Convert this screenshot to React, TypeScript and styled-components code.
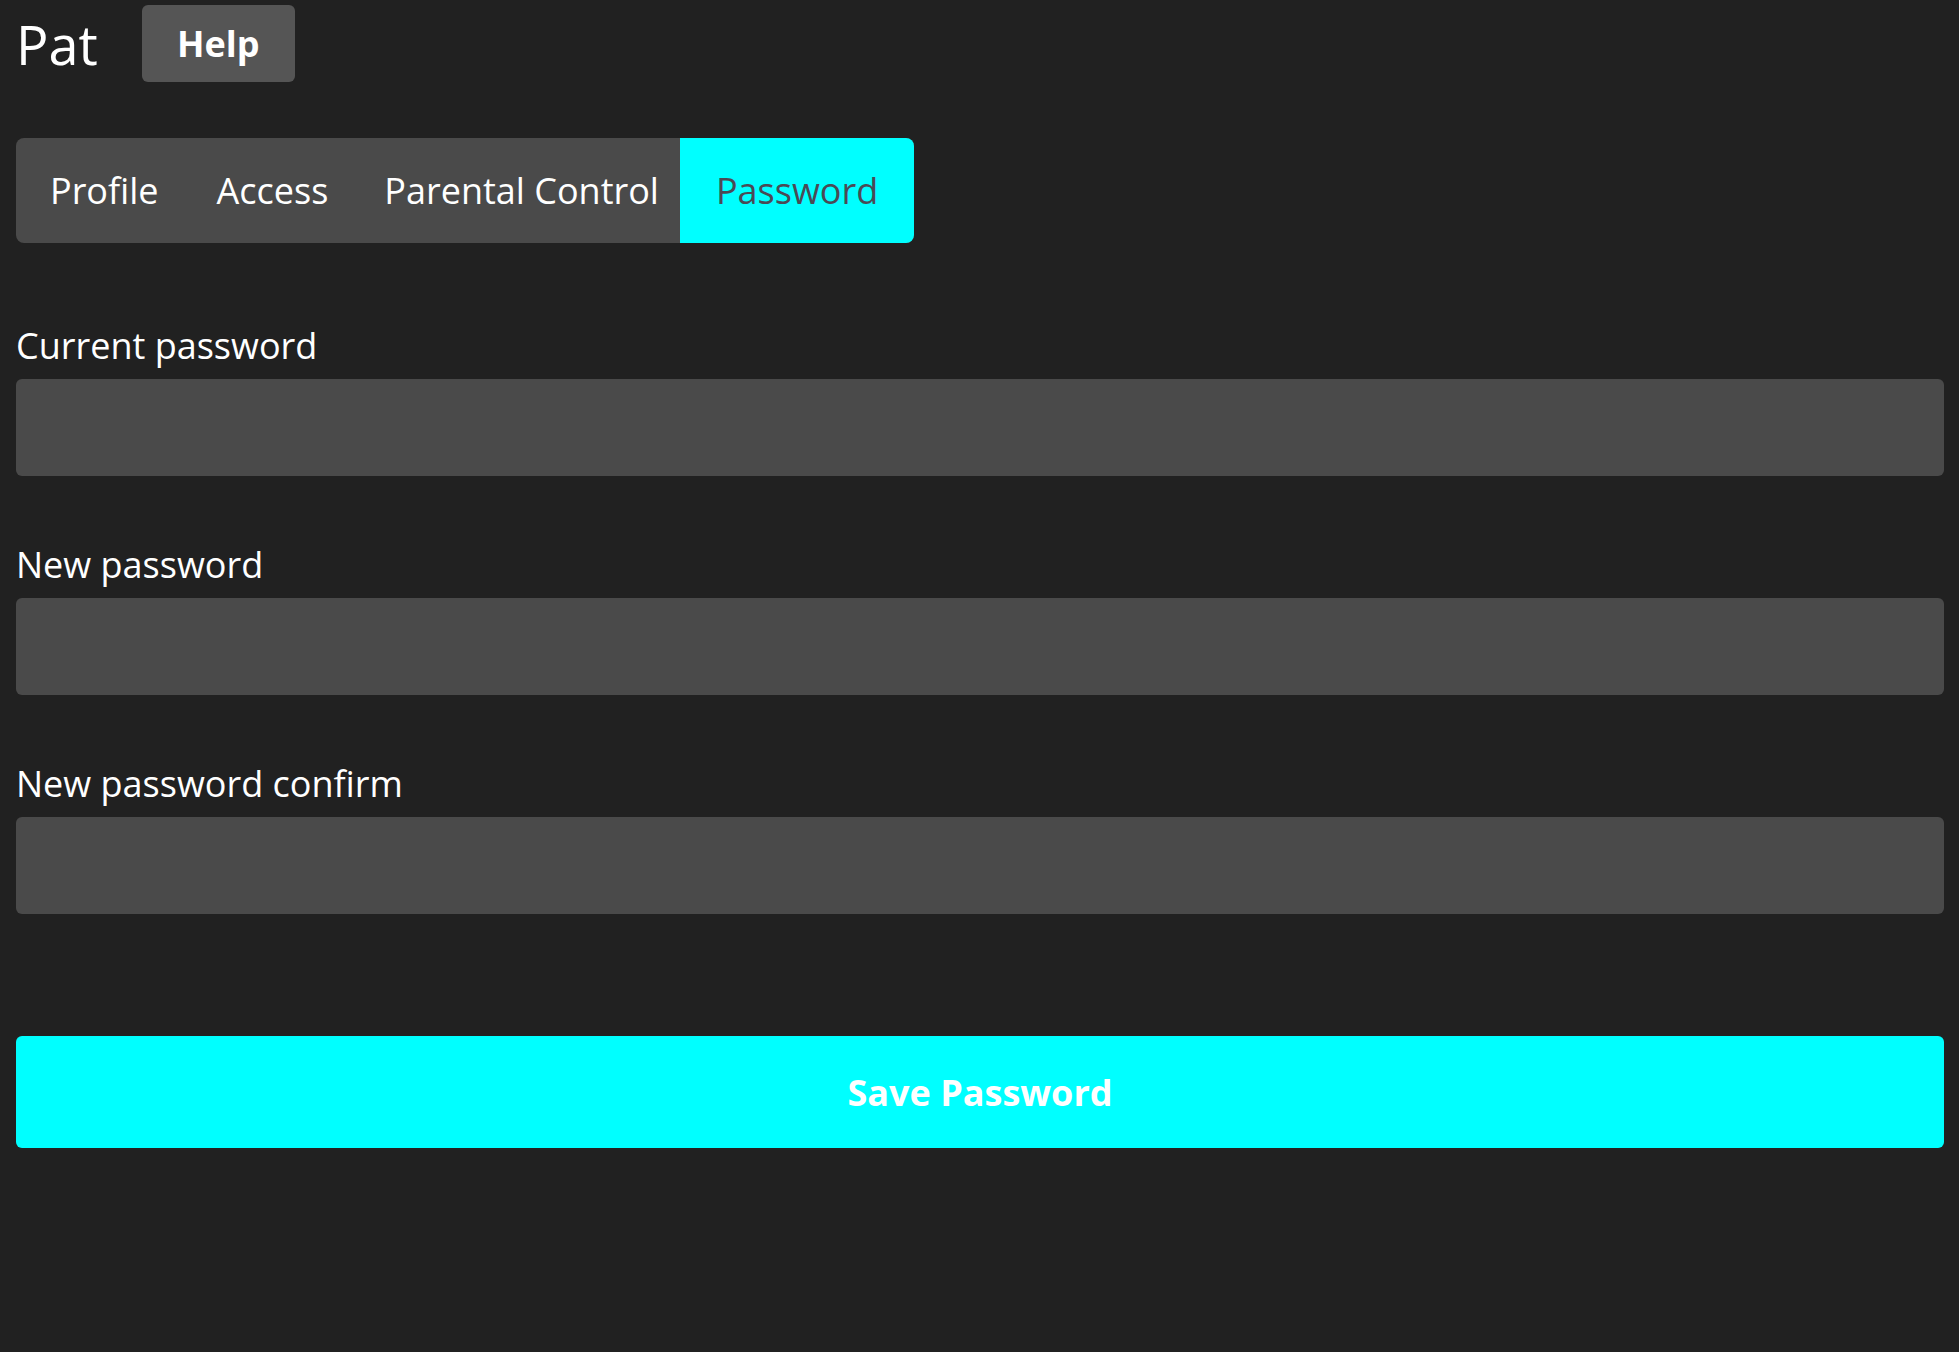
import React from "react";
import styled, { createGlobalStyle } from "styled-components";

const Global = createGlobalStyle`
  html, body {
    margin: 0;
    padding: 0;
    background: #212121;
  }
  body {
    font-family: "Open Sans", "Noto Sans", sans-serif;
    color: #ffffff;
  }
`;

const Page = styled.div`
  padding: 5px 15px 0 16px;
  display: flex;
  flex-direction: column;
`;

const Header = styled.header`
  display: flex;
  align-items: center;
  gap: 44px;
`;

const Name = styled.h1`
  margin: 0;
  font-size: 54px;
  font-weight: 400;
  line-height: 1;
  color: #ffffff;
`;

const HelpButton = styled.button`
  height: 77px;
  width: 153px;
  border: none;
  border-radius: 6px;
  background: #555555;
  color: #ffffff;
  font-family: inherit;
  font-size: 36px;
  font-weight: 700;
  cursor: pointer;
`;

const Tabs = styled.nav`
  margin-top: 56px;
  display: flex;
  align-self: flex-start;
  height: 105px;
  background: #4a4a4a;
  border-radius: 8px;
  overflow: hidden;
`;

const Tab = styled.button<{ $active?: boolean; $left: number; $right: number }>`
  border: none;
  padding: 0 ${(p) => p.$right}px 0 ${(p) => p.$left}px;
  background: ${(p) => (p.$active ? "#00ffff" : "transparent")};
  color: ${(p) => (p.$active ? "#4a4a55" : "#ffffff")};
  font-family: inherit;
  font-size: 36px;
  font-weight: 400;
  cursor: pointer;
`;

const Form = styled.form`
  margin-top: 78px;
  display: flex;
  flex-direction: column;
  gap: 64px;
`;

const Field = styled.label`
  display: flex;
  flex-direction: column;
  gap: 9px;
`;

const LabelText = styled.span`
  font-size: 36px;
  line-height: 49px;
  color: #ffffff;
`;

const Input = styled.input`
  height: 97px;
  box-sizing: border-box;
  border: none;
  border-radius: 6px;
  background: #4a4a4a;
  color: #ffffff;
  font-family: inherit;
  font-size: 32px;
  padding: 0 20px;
  outline: none;
`;

const SaveButton = styled.button`
  margin-top: 58px;
  height: 112px;
  border: none;
  border-radius: 6px;
  background: #00ffff;
  color: #ffffff;
  font-family: inherit;
  font-size: 36px;
  font-weight: 700;
  cursor: pointer;
`;

export default function App() {
  return (
    <>
      <Global />
      <Page>
        <Header>
          <Name>Pat</Name>
          <HelpButton>Help</HelpButton>
        </Header>
        <Tabs>
          <Tab $left={34} $right={30}>Profile</Tab>
          <Tab $left={28} $right={28}>Access</Tab>
          <Tab $left={28} $right={21}>Parental Control</Tab>
          <Tab $left={36} $right={36} $active>Password</Tab>
        </Tabs>
        <Form onSubmit={(e) => e.preventDefault()}>
          <Field>
            <LabelText>Current password</LabelText>
            <Input type="password" />
          </Field>
          <Field>
            <LabelText>New password</LabelText>
            <Input type="password" />
          </Field>
          <Field>
            <LabelText>New password confirm</LabelText>
            <Input type="password" />
          </Field>
          <SaveButton type="submit">Save Password</SaveButton>
        </Form>
      </Page>
    </>
  );
}
